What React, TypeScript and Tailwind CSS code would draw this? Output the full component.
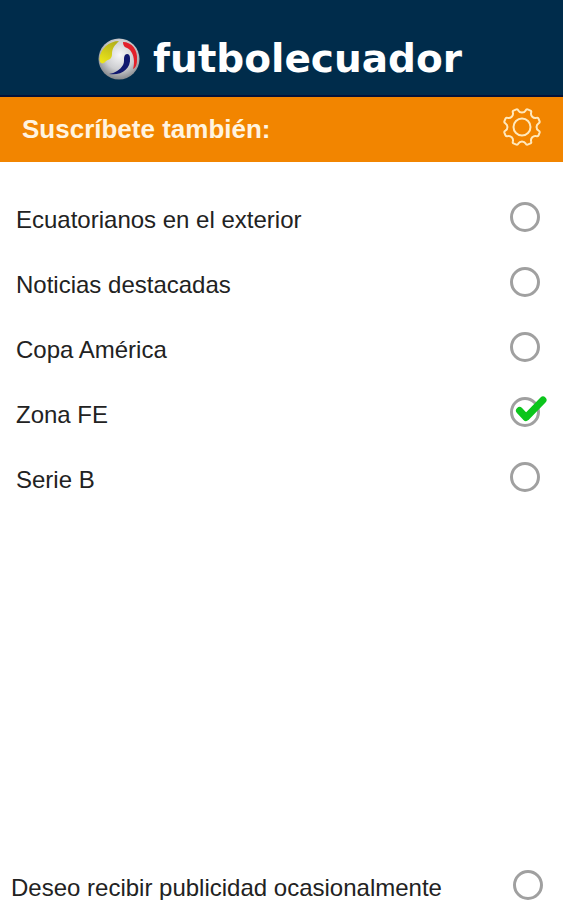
import React, { useState } from 'react';

const TOPICS = [
    { id: 'exterior', label: 'Ecuatorianos en el exterior' },
    { id: 'destacadas', label: 'Noticias destacadas' },
    { id: 'copa', label: 'Copa América' },
    { id: 'zona', label: 'Zona FE' },
    { id: 'serieb', label: 'Serie B' }
];

const BallLogo: React.FC = () => (
    <svg className="h-11 w-11 shrink-0" viewBox="0 0 44 44" aria-hidden="true">
        <defs>
            <radialGradient id="ball" cx="0.52" cy="0.4" r="0.6">
                <stop offset="0" stopColor="#f6f6f8" />
                <stop offset="0.6" stopColor="#cdced1" />
                <stop offset="1" stopColor="#85888c" />
            </radialGradient>
            <linearGradient id="yellow" x1="0.7" y1="0" x2="0.3" y2="1">
                <stop offset="0" stopColor="#b3b01c" />
                <stop offset="1" stopColor="#ebe41a" />
            </linearGradient>
        </defs>
        <circle cx="22" cy="22" r="20.5" fill="url(#ball)" />
        <path d="M22 4C12 4 3 12 2.5 22C2.500 26 5 28 8 25C11 22 15 23 15 17C15 11 18 8 22 4Z" fill="url(#yellow)" />
        <path d="M26 5C35 5 41 13 40 23C40 27 39 31 36 32C38 25 37 18 33 13C30 10 26 11 26 5Z" fill="#e3202a" />
        <path d="M28 18C30 16 33 17 33 21C34 32 24 39 12 37C18 36 23 33 26 28C28 24 26 21 28 18Z" fill="#10186f" />
    </svg>
);

const GearIcon: React.FC = () => {
    const point = (radius: number, degrees: number) => {
        const rad = (degrees * Math.PI) / 180;
        return `${(20 + radius * Math.cos(rad)).toFixed(2)} ${(20 + radius * Math.sin(rad)).toFixed(2)}`;
    };

    // eight blunt teeth joined by scalloped valleys
    let outline = `M${point(17, 12.5)}`;
    for (let i = 0; i < 8; i++) {
        const tooth = 22.5 + i * 45;
        outline += ` Q${point(18.5, tooth - 9)} ${point(18.5, tooth - 5)}`;
        outline += ` L${point(18.5, tooth + 5)}`;
        outline += ` Q${point(18.5, tooth + 9)} ${point(17, tooth + 10)}`;
        outline += ` C${point(14, tooth + 14)} ${point(14, tooth + 31)} ${point(17, tooth + 35)}`;
    }

    return (
        <svg className="h-10 w-10" viewBox="0 0 40 40" fill="none" stroke="#ffe9bd" strokeWidth="2" strokeLinejoin="round" aria-hidden="true">
            <path d={`${outline} Z`} />
            <circle cx="20" cy="20" r="8.5" />
        </svg>
    );
};

interface OptionProps {
    id: string;
    label: string;
    checked: boolean;
    onToggle: (id: string) => void;
}

const Option: React.FC<OptionProps> = ({ id, label, checked, onToggle }) => (
    <div className="flex items-start justify-between">
        <label htmlFor={id} className="pt-1.5 text-2xl leading-6 text-[#222222]">
            {label}
        </label>
        <span className="relative flex shrink-0">
            <input
                id={id}
                type="checkbox"
                checked={checked}
                onChange={() => onToggle(id)}
                className="h-[30px] w-[30px] appearance-none rounded-full border-3 border-[#a0a0a0] bg-white"
            />
            {checked && (
                <svg
                    className="pointer-events-none absolute top-0 left-0 h-[30px] w-[40px] overflow-visible"
                    viewBox="0 0 40 30"
                    fill="none"
                    stroke="#0cc51c"
                    strokeWidth="7"
                    strokeLinecap="round"
                    strokeLinejoin="round"
                    aria-hidden="true"
                >
                    <path d="M9.500 13.500L16 20.500L33 3" />
                </svg>
            )}
        </span>
    </div>
);

export default function App() {
    const [selected, setSelected] = useState<string[]>(['zona']);

    const toggle = (id: string) => {
        setSelected(prev => (prev.includes(id) ? prev.filter(item => item !== id) : [...prev, id]));
    };

    return (
        <div className="flex min-h-screen flex-col overflow-hidden bg-white font-['Liberation_Sans',Arial,sans-serif]">
            <header className="flex items-center justify-center gap-3 border-b-2 border-[#041238] bg-[#002c4b] pt-[35px] pr-1 pb-3">
                <BallLogo />
                <span className="font-['DejaVu_Sans',sans-serif] text-[39px] leading-12 font-bold text-white">futbolecuador</span>
            </header>

            <div className="flex items-start justify-between bg-[#f28500] pt-[10px] pb-[15px] pr-[21px] pl-[22px]">
                <h1 className="pt-1 text-[26px] leading-9 font-bold text-[#fff4e0]">Suscríbete también:</h1>
                <button type="button" aria-label="Configuración" className="flex">
                    <GearIcon />
                </button>
            </div>

            <main className="flex flex-1 flex-col">
                <div className="flex flex-col gap-[35px] pt-10 pr-[23px] pl-4">
                    {TOPICS.map(topic => (
                        <Option
                            key={topic.id}
                            id={topic.id}
                            label={topic.label}
                            checked={selected.includes(topic.id)}
                            onToggle={toggle}
                        />
                    ))}
                </div>
                <div className="mt-auto pr-5 pl-[11px]">
                    <Option
                        id="publicidad"
                        label="Deseo recibir publicidad ocasionalmente"
                        checked={selected.includes('publicidad')}
                        onToggle={toggle}
                    />
                </div>
            </main>
        </div>
    );
}
